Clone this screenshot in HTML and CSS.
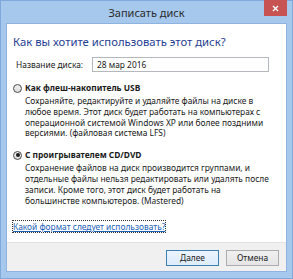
FILE: index.html
```html
<!DOCTYPE html>
<html lang="ru">
<head>
<meta charset="utf-8">
<title>Записать диск</title>
<link rel="stylesheet" href="styles.css">
</head>
<body>
<div class="window">
  <div class="titlebar">
    <span class="spacer"></span>
    <span class="title">Записать диск</span>
    <span class="close"><svg width="7" height="7" viewBox="0 0 7 7"><path d="M1 1L6 6M6 1L1 6" stroke="#fff" stroke-width="1.4"/></svg></span>
  </div>
  <div class="client">
    <div class="content">
      <h1 class="heading">Как вы хотите использовать этот диск?</h1>
      <div class="name-row">
        <span class="name-label">Название диска:</span>
        <span class="input">28 мар 2016</span>
      </div>
      <div class="option">
        <div class="option-head"><span class="radio"></span><span class="option-title">Как флеш-накопитель USB</span></div>
        <p class="option-desc">Сохраняйте, редактируйте и удаляйте файлы на диске в любое время. Этот диск будет работать на компьютерах с операционной системой Windows XP или более поздними версиями. (файловая система LFS)</p>
      </div>
      <div class="option">
        <div class="option-head"><span class="radio checked"></span><span class="option-title">С проигрывателем CD/DVD</span></div>
        <p class="option-desc">Сохранение файлов на диск производится группами, и отдельные файлы нельзя редактировать или удалять после записи. Кроме того, этот диск будет работать на большинстве компьютеров. (Mastered)</p>
      </div>
      <a class="help-link" href="#">Какой формат следует использовать?</a>
    </div>
    <div class="footer">
      <span class="btn default">Далее</span>
      <span class="btn">Отмена</span>
    </div>
  </div>
</div>
</body>
</html>
```
FILE: styles.css
```css
* { box-sizing: border-box; }
html, body { margin: 0; padding: 0; }
body {
  width: 293px;
  height: 279px;
  overflow: hidden;
  font-family: "Noto Sans", "Liberation Sans", sans-serif;
  font-size: 8.4px;
  color: #1a1a1a;
  background: #9fc3ea;
}
.window {
  width: 293px;
  height: 279px;
  background: #a6c8ed;
  border: 1px solid #7fa9da;
  padding: 0 5px 6px 5px;
  display: flex;
  flex-direction: column;
}
.titlebar {
  height: 22px;
  display: grid;
  grid-template-columns: 1fr auto 1fr;
  align-items: start;
}
.title {
  font-size: 11px;
  line-height: 24px;
  color: #2b2b2b;
}
.close {
  justify-self: end;
  width: 23px;
  height: 16px;
  margin-top: -1px;
  background: #c75352;
  display: flex;
  align-items: center;
  justify-content: center;
}
.client {
  flex: 1;
  background: #fff;
  border: 1px solid #8fb3de;
  display: flex;
  flex-direction: column;
}
.content {
  flex: 1;
  padding: 11px 0 0 6px;
}
.heading {
  margin: 0;
  font-weight: normal;
  font-size: 11.3px;
  line-height: 14px;
  color: #1f3e92;
}
.name-row {
  margin-top: 8px;
  display: flex;
  align-items: center;
  height: 15px;
}
.name-label {
  width: 79px;
  padding-left: 3px;
}
.input {
  width: 177px;
  height: 15px;
  border: 1px solid #b4b7be;
  padding-left: 4px;
  line-height: 13px;
}
.option { margin-top: 10px; }
.option-head {
  display: flex;
  align-items: center;
  height: 12px;
}
.radio {
  width: 9px;
  height: 9px;
  border-radius: 50%;
  border: 1px solid #4a4a4a;
  background: linear-gradient(#f1f1f1, #dcdcdc);
  margin-right: 3px;
  display: flex;
  align-items: center;
  justify-content: center;
}
.radio.checked::after {
  content: "";
  width: 4px;
  height: 4px;
  border-radius: 50%;
  background: #1a1a1a;
}
.option-title {
  font-weight: bold;
  line-height: 12px;
}
.option-desc {
  margin: 2px 0 0 12px;
  width: 248px;
  line-height: 10.8px;
}
.help-link {
  display: inline-block;
  margin-top: 15px;
  color: #1e62b8;
  line-height: 11px;
  outline: 1px dotted #333;
  outline-offset: 0;
}
.footer {
  height: 29px;
  background: #f0f0f0;
  border-top: 1px solid #e1e1e1;
  display: flex;
  justify-content: flex-end;
  align-items: flex-start;
  gap: 7px;
  padding: 7px 7px 0 0;
}
.btn {
  width: 53px;
  height: 16px;
  border: 1px solid #acacac;
  background: linear-gradient(#f0f0f0, #e5e5e5);
  text-align: center;
  line-height: 14px;
}
.btn.default {
  border-color: #3c7fb1;
  background: linear-gradient(#ecf4fc, #dcecfc);
}
```
